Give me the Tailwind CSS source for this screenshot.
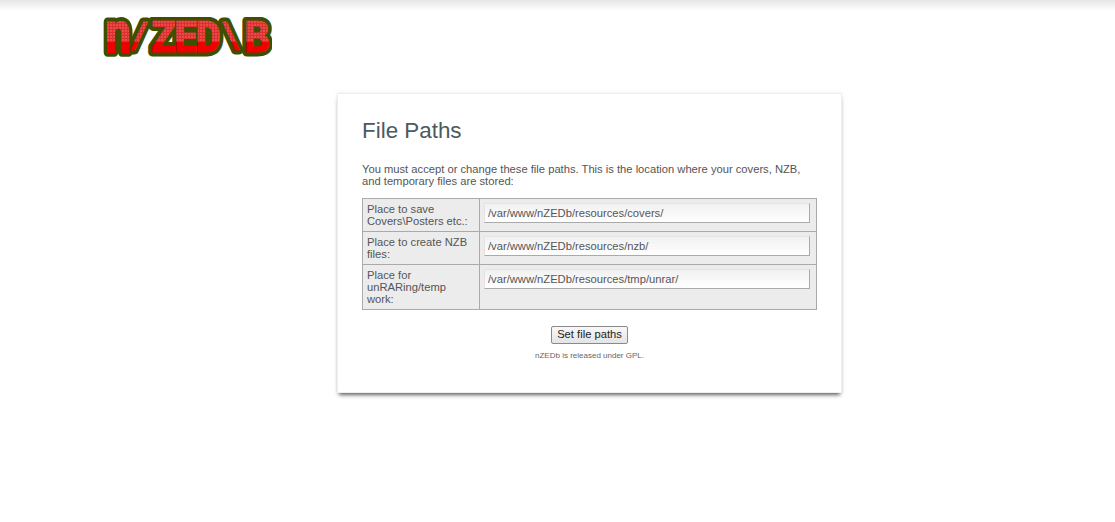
<!DOCTYPE html>
<html lang="en">
  <head>
    <meta charset="UTF-8" />
    <title>File Paths</title>
    <script src="https://cdn.jsdelivr.net/npm/@tailwindcss/browser@4"></script>
  </head>
  <body class="bg-white font-['Liberation_Sans',Arial,sans-serif] text-[11.2px] leading-[12px] text-[#555]">
    <div class="h-[522px] overflow-hidden bg-gradient-to-b from-[#e6e6e6] to-white to-[11px]">
      <header class="h-[93px] pt-[17px] pl-[103px]">
        <svg width="169" height="41" viewBox="0 0 169 41" class="block">
          <defs>
            <pattern id="grid" width="3" height="3" patternUnits="userSpaceOnUse">
              <rect width="3" height="3" fill="#ec4a48" />
              <rect width="1" height="3" fill="#d93030" />
              <rect width="3" height="1" fill="#d93030" />
            </pattern>
            <pattern id="fillrg" width="169" height="41" patternUnits="userSpaceOnUse">
              <rect width="169" height="41" fill="#f00000" />
              <rect width="169" height="25" fill="url(#grid)" />
            </pattern>
            <g id="letters" font-family="'DejaVu Sans Mono'" font-weight="700" text-anchor="middle">
              <text x="15" y="34.5" font-size="56" textLength="29" lengthAdjust="spacingAndGlyphs">n</text>
              <text x="36" y="29.5" font-size="33">/</text>
              <text x="60" y="34.5" font-size="42.5">Z</text>
              <text x="83" y="34.5" font-size="42.5">E</text>
              <text x="105" y="34.5" font-size="42.5">D</text>
              <text x="128" y="29.5" font-size="33">\</text>
              <text x="154" y="34.5" font-size="42.5">B</text>
            </g>
          </defs>
          <use href="#letters" fill="#3f4f00" stroke="#3f4f00" stroke-width="9" stroke-linejoin="round" />
          <use href="#letters" fill="url(#fillrg)" stroke="url(#fillrg)" stroke-width="1.2" />
        </svg>
      </header>

      <main class="ml-[337px] h-[300px] w-[505px] border border-[#eee] bg-white px-6 shadow-[0_4px_4px_-2px_rgba(0,0,0,0.6),0_0_4px_rgba(0,0,0,0.08)]">
        <h1 class="mt-[24px] text-[22.4px] leading-[26px] font-normal text-[#4c5a60]">File Paths</h1>
        <p class="mt-[19px] w-[450px]">You must accept or change these file paths. This is the location where your covers, NZB, and temporary files are stored:</p>
        <table class="mt-[11px] w-[455px] table-fixed border-collapse bg-[#ececec]">
          <colgroup>
            <col class="w-[117px]" />
            <col />
          </colgroup>
          <tbody>
            <tr>
              <td class="border border-[#aaa] px-1 py-1 align-top">Place to save Covers\Posters etc.:</td>
              <td class="border border-[#aaa] pl-1 pt-1 align-top">
                <input value="/var/www/nZEDb/resources/covers/" class="block h-5 w-[326px] border border-[#aaa] border-t-[#e4e4e4] border-l-[#e4e4e4] bg-gradient-to-b from-[#f1f1f1] to-white px-[3px] text-[11.2px] text-[#555]" />
              </td>
            </tr>
            <tr>
              <td class="border border-[#aaa] px-1 py-1 align-top">Place to create NZB files:</td>
              <td class="border border-[#aaa] pl-1 pt-1 align-top">
                <input value="/var/www/nZEDb/resources/nzb/" class="block h-5 w-[326px] border border-[#aaa] border-t-[#e4e4e4] border-l-[#e4e4e4] bg-gradient-to-b from-[#f1f1f1] to-white px-[3px] text-[11.2px] text-[#555]" />
              </td>
            </tr>
            <tr>
              <td class="border border-[#aaa] px-1 py-1 align-top">Place for unRARing/temp work:</td>
              <td class="border border-[#aaa] pl-1 pt-1 align-top">
                <input value="/var/www/nZEDb/resources/tmp/unrar/" class="block h-5 w-[326px] border border-[#aaa] border-t-[#e4e4e4] border-l-[#e4e4e4] bg-gradient-to-b from-[#f1f1f1] to-white px-[3px] text-[11.2px] text-[#555]" />
              </td>
            </tr>
          </tbody>
        </table>
        <div class="mt-[16px] flex justify-center">
          <button class="h-[18px] w-[77px] rounded-[2px] border border-[#8a8a8a] bg-gradient-to-b from-[#f8f8f8] to-[#e4e4e4] text-[11.2px] leading-none text-[#222]">Set file paths</button>
        </div>
        <p class="mt-[7px] text-center text-[8px] leading-[10px] text-[#666]">nZEDb is released under GPL.</p>
      </main>
    </div>
  </body>
</html>
